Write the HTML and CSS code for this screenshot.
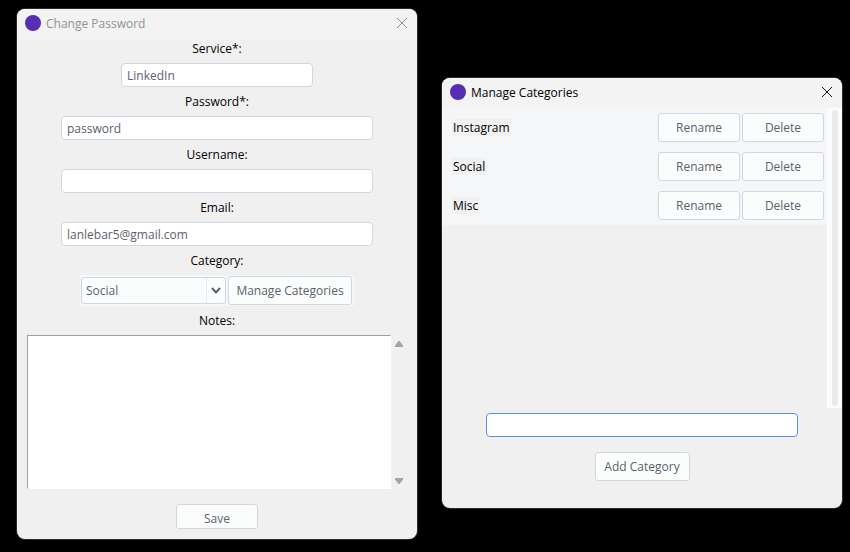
FILE: index.html
```html
<!DOCTYPE html>
<html lang="en">
<head>
<meta charset="utf-8">
<title>Change Password</title>
<link rel="stylesheet" href="styles.css">
</head>
<body>
<main class="desktop">
  <section class="window inactive" aria-labelledby="change-title">
    <header class="titlebar">
      <span class="logo"></span>
      <h1 class="title" id="change-title">Change Password</h1>
      <button class="close" type="button" aria-label="Close"><svg width="10" height="10" viewBox="0 0 10 10"><path d="M0 0 10 10M10 0 0 10"/></svg></button>
    </header>
    <form class="form">
      <div class="field">
        <label for="service">Service*:</label>
        <input class="entry short" id="service" type="text" value="LinkedIn">
      </div>
      <div class="field">
        <label for="password">Password*:</label>
        <input class="entry" id="password" type="text" value="password">
      </div>
      <div class="field">
        <label for="username">Username:</label>
        <input class="entry" id="username" type="text">
      </div>
      <div class="field">
        <label for="email">Email:</label>
        <input class="entry" id="email" type="text" value="lanlebar5@gmail.com">
      </div>
      <div class="field">
        <label for="category">Category:</label>
        <div class="category">
          <div class="combo">
            <select id="category">
              <option>Instagram</option>
              <option selected>Social</option>
              <option>Misc</option>
            </select>
            <span class="chevron"><svg width="10" height="7" viewBox="0 0 10 7"><path d="M1 1 5 5.4 9 1"/></svg></span>
          </div>
          <button class="button manage" type="button">Manage Categories</button>
        </div>
      </div>
      <div class="field notes-field">
        <label for="notes">Notes:</label>
        <div class="notes">
          <textarea id="notes"></textarea>
          <div class="arrows">
            <button type="button" aria-label="Scroll up"><svg width="8" height="6" viewBox="0 0 8 6"><path d="M3.5 0h1L8 4.5V6H0V4.5z"/></svg></button>
            <button type="button" aria-label="Scroll down"><svg width="8" height="6" viewBox="0 0 8 6"><path d="M0 0h8v1.5L4.5 6h-1L0 1.5z"/></svg></button>
          </div>
        </div>
      </div>
      <button class="button save" type="button">Save</button>
    </form>
  </section>

  <section class="window categories" aria-labelledby="manage-title">
    <header class="titlebar">
      <span class="logo"></span>
      <h1 class="title" id="manage-title">Manage Categories</h1>
      <button class="close" type="button" aria-label="Close"><svg width="10" height="10" viewBox="0 0 10 10"><path d="M0 0 10 10M10 0 0 10"/></svg></button>
    </header>
    <div class="scroller">
      <ul class="list">
        <li><span class="name">Instagram</span><button class="button" type="button">Rename</button><button class="button" type="button">Delete</button></li>
        <li><span class="name">Social</span><button class="button" type="button">Rename</button><button class="button" type="button">Delete</button></li>
        <li><span class="name">Misc</span><button class="button" type="button">Rename</button><button class="button" type="button">Delete</button></li>
      </ul>
      <div class="track"><div class="thumb"></div></div>
    </div>
    <form class="add">
      <input class="entry focused" type="text" aria-label="New category">
      <button class="button wide" type="button">Add Category</button>
    </form>
  </section>
</main>
</body>
</html>
```
FILE: styles.css
```css
* {
  box-sizing: border-box;
}

body {
  margin: 0;
  background: #000;
  color: #000;
  font: 12px/17px "Open Sans", "Noto Sans", sans-serif;
}

button,
input,
select,
textarea {
  margin: 0;
  font: inherit;
  color: #5c616c;
}

.desktop {
  display: flex;
  align-items: flex-start;
  gap: 25px;
  padding: 9px 8px 12px 17px;
}

.window {
  flex: 1;
  min-width: 0;
  overflow: hidden;
  border-radius: 8px;
  background: #f0f0f0;
  box-shadow: 0 0 0 1px #2b2b2b;
}

.categories {
  margin-top: 69px;
}

.titlebar {
  display: flex;
  align-items: center;
  gap: 5px;
  height: 30px;
  padding: 0 10px 2px 8px;
  background: #f3f3f3;
}

.logo {
  width: 16px;
  height: 16px;
  border-radius: 50%;
  background: #552db7;
}

.title {
  flex: 1;
  margin: 0;
  font-size: 12px;
  font-weight: 400;
}

.inactive .title {
  color: #929292;
}

.close {
  display: flex;
  padding: 0;
  border: 0;
  background: none;
}

.close svg {
  overflow: visible;
  fill: none;
  stroke: #111;
}

.inactive .close svg {
  stroke: #8f8f8f;
}

.form {
  display: flex;
  flex-direction: column;
  align-items: center;
  gap: 5px;
  padding-bottom: 10px;
}

.field {
  display: flex;
  flex-direction: column;
  align-items: center;
  gap: 4px;
  width: 100%;
}

.field label {
  line-height: 20px;
}

.entry {
  width: 78%;
  height: 24px;
  padding: 0 5px;
  border: 1px solid #cfd6e6;
  border-radius: 4px;
  background: #fff;
  outline: none;
}

.short {
  width: 48%;
}

.focused {
  border-color: #5294e2;
}

.category {
  display: flex;
  align-items: center;
  gap: 2px;
  padding: 1px 2px 1px 1px;
  background: #f5f6f7;
}

.combo {
  position: relative;
}

.combo select {
  display: block;
  width: 145px;
  height: 27px;
  padding: 0 24px 0 4px;
  border: 1px solid #cfd6e6;
  border-radius: 3px;
  background: #fbfdfd;
  appearance: none;
  outline: none;
}

.chevron {
  position: absolute;
  top: 1px;
  right: 1px;
  bottom: 1px;
  display: flex;
  align-items: center;
  justify-content: center;
  width: 19px;
  border-left: 1px solid #e6eaf2;
  pointer-events: none;
}

.chevron svg {
  fill: none;
  stroke: #5c616c;
  stroke-width: 2;
}

.button {
  width: 82px;
  height: 29px;
  padding: 0;
  border: 1px solid #cfd6e6;
  border-radius: 3px;
  background: #fbfdfd;
}

.manage {
  width: 124px;
}

.wide {
  width: 95px;
}

.save {
  height: 25px;
  margin-top: 10px;
  padding-top: 3px;
}

.notes {
  display: flex;
  width: 100%;
  padding: 0 10px;
}

.notes textarea {
  flex: 1;
  min-width: 0;
  height: 154px;
  padding: 2px;
  border: 1px solid #fff;
  border-top-color: #a0a0a0;
  border-left-color: #a0a0a0;
  background: #fff;
  resize: none;
  outline: none;
}

.arrows {
  display: flex;
  flex-direction: column;
  align-items: center;
  justify-content: space-between;
  width: 16px;
  padding: 6px 0 5px;
}

.arrows button {
  display: flex;
  padding: 0;
  border: 0;
  background: none;
}

.arrows svg {
  fill: #a3a3a3;
}

.scroller {
  display: flex;
  height: 300px;
}

.list {
  flex: 1;
  align-self: flex-start;
  margin: 0;
  padding: 0;
  list-style: none;
  background: #f5f6f7;
}

.list li {
  display: flex;
  align-items: center;
  gap: 2px;
  padding: 5px 3px 5px 10px;
}

.name {
  margin-right: auto;
  padding: 0 1px;
  background: #f0f0f0;
}

.track {
  width: 15px;
  padding: 2px 4px 2px 5px;
  background: #fcfcfc;
}

.thumb {
  height: 100%;
  border-radius: 3px;
  background: #e9eaec;
}

.add {
  display: flex;
  flex-direction: column;
  align-items: center;
  gap: 15px;
  padding: 5px 0 27px;
}
```
